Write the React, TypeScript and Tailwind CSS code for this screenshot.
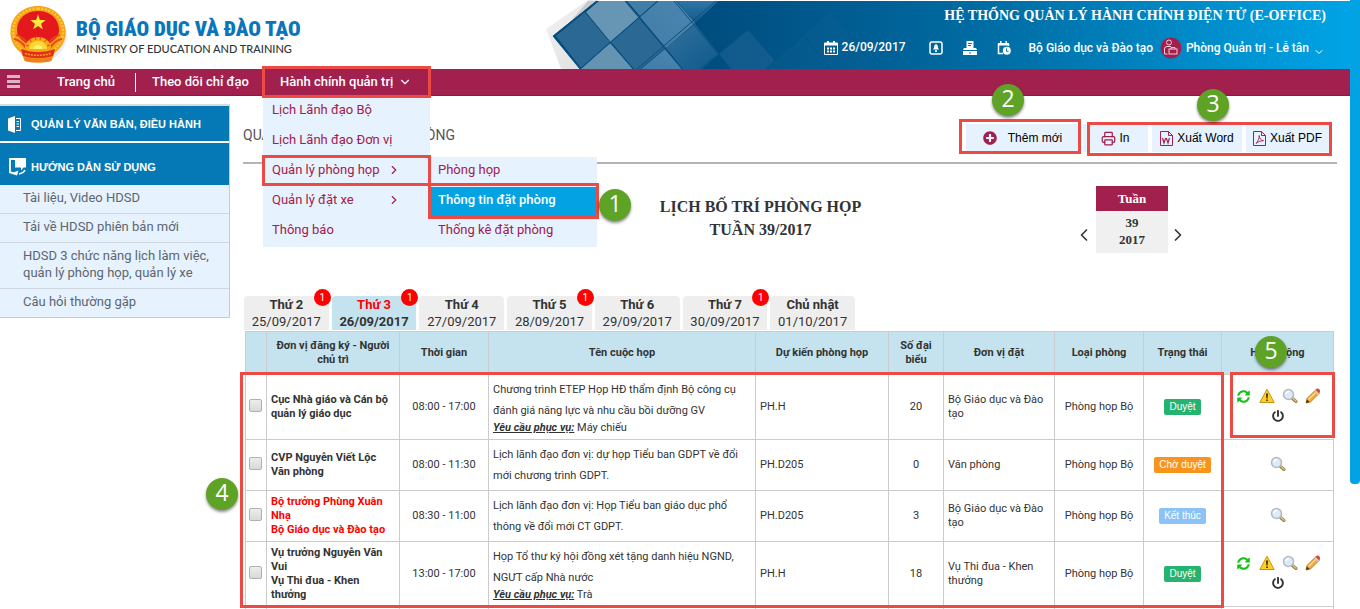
import type { ReactNode } from "react";
import { FaPlusCircle, FaPowerOff, FaSyncAlt } from "react-icons/fa";
import { ChevronDown, ChevronLeft, ChevronRight, Printer } from "lucide-react";

function Step({ n, className }: { n: number; className: string }) {
  return (
    <span
      className={`pointer-events-none absolute z-40 flex size-8 items-center justify-center rounded-full bg-[#5ea226] pb-1 font-['Open_Sans',sans-serif] text-[23px] leading-none text-white shadow-[0_2px_3px_rgba(0,0,0,0.45)] ${className}`}
    >
      {n}
    </span>
  );
}

function Frame({ className }: { className: string }) {
  return (
    <span
      className={`pointer-events-none absolute z-30 border-3 border-[#ec4a44] ${className}`}
    />
  );
}

function Emblem() {
  return (
    <svg viewBox="0 0 60 60" className="size-[60px] shrink-0" aria-hidden="true">
      <ellipse cx="32" cy="31" rx="27" ry="27" fill="#000" opacity="0.08" />
      <path
        d="M30 2C15 2 3.500 12 2.500 26c-1 10 4 18 11 23l3 8c9 2 18 2 27 0l3-8c7-5 12-13 11-23C56.500 12 45 2 30 2z"
        fill="#f6a216"
      />
      <path
        d="M30 4.500C16 4.500 6 14 5 26c-.4 8 3 15 10 20M30 4.500C44 4.500 54 14 55 26c.4 8-3 15-10 20"
        fill="none"
        stroke="#fcc93a"
        strokeWidth="2.500"
        strokeDasharray="2 1.500"
      />
      <path
        d="M30 7C18 7 9.500 14.500 9 25c-.2 5 1.500 8 4 10l7 6c3-6 17-6 20 0l7-6c2.500-2 4.200-5 4-10C50.500 14.500 42 7 30 7z"
        fill="#e5181d"
      />
      <path
        d="M30 10.500l1.900 5.500 5.800.1-4.600 3.600 1.700 5.600-4.800-3.400-4.800 3.400 1.700-5.600-4.600-3.600 5.800-.1z"
        fill="#fdea3c"
      />
      <path
        d="M8 31c4 1 8 3 11 8M6 35c5 1 9 4 12 9M52 31c-4 1-8 3-11 8M54 35c-5 1-9 4-12 9"
        fill="none"
        stroke="#e8461a"
        strokeWidth="1.800"
      />
      <path d="M17 44a13 11 0 0 1 26 0l-3 4H20z" fill="#f9a81a" />
      <path
        d="M21 42l-3-1M23.500 38l-2.500-3M28 36l-1-3.500M32 36l1-3.500M36.500 38l2.500-3M39 42l3-1"
        stroke="#e8461a"
        strokeWidth="1"
      />
      <path d="M21 45a9 8 0 0 1 18 0z" fill="#fdd835" />
      <path d="M25.500 45a4.500 4 0 0 1 9 0z" fill="#fff176" />
      <path d="M13 45c11 4 23 4 34 0l-2 7c-10 3-20 3-30 0z" fill="#e23119" />
      <path
        d="M17 49.500c9 2.500 17 2.500 26 0"
        fill="none"
        stroke="#f9a81a"
        strokeWidth="1.500"
        strokeDasharray="2 1"
      />
      <path d="M16 53c9 2 19 2 28 0l-1 4c-8 2-18 2-26 0z" fill="#f07f1b" />
    </svg>
  );
}

function BannerPattern() {
  return (
    <svg
      viewBox="0 0 400 69"
      className="absolute top-0 left-0 h-[69px] w-[400px]"
      aria-hidden="true"
    >
      <defs>
        <linearGradient id="shade" x1="0" y1="0" x2="1" y2="1">
          <stop offset="0" stopColor="#f4f4f4" />
          <stop offset="1" stopColor="#dcdcdc" />
        </linearGradient>
        <linearGradient id="mid" x1="0" y1="1" x2="1" y2="0">
          <stop offset="0" stopColor="#417ca6" />
          <stop offset="1" stopColor="#4a86af" />
        </linearGradient>
        <linearGradient id="low" x1="0" y1="0" x2="1" y2="1">
          <stop offset="0" stopColor="#34709c" />
          <stop offset="1" stopColor="#0d5a8c" />
        </linearGradient>
        <linearGradient id="top" x1="0" y1="0" x2="0" y2="1">
          <stop offset="0" stopColor="#2d76a6" />
          <stop offset="1" stopColor="#15598a" />
        </linearGradient>
      </defs>
      <path d="M3 29L45 0h12L10 36l27 33H18z" fill="url(#shade)" />
      <path d="M45 1h12L22 28z" fill="#a9a9a9" opacity="0.5" />
      <path d="M10 36L53 1h98v68H37z" fill="#004b7d" />
      <path d="M13 36L42 12l25 30-29 26z" fill="#2b6994" />
      <path d="M43 12L56 1h26l14 16-29 25z" fill="#6796b5" />
      <path d="M67 43l23 26H38z" fill="#6593b2" />
      <path d="M68 42l28-24 26 30-25 21h-6z" fill="#2b6994" />
      <path d="M84 1h30L97 16z" fill="#427da5" />
      <path d="M97 17l18-16h18l19 22-29 25z" fill="url(#mid)" />
      <path d="M134 1h41l-23 22z" fill="url(#top)" />
      <path d="M122 49l17 20H98z" fill="url(#mid)" />
      <path d="M123 48l29-24 24 30-17 15h-19z" fill="url(#low)" />
      <path
        d="M10 36L54 1M37 69L115 1M94 69l79-68M157 69l19-15M42 12l48 57M82 1l57 68M131 1l57 68M10 36l27 33"
        stroke="#0a4f80"
        strokeWidth="1"
        fill="none"
      />
      <path d="M176 54l29-24 27 31-9 8h-35z" fill="#1a5f91" opacity="0.7" />
      <path d="M232 60l55-48 40 50-6 7h-96z" fill="#1a6496" opacity="0.2" />
      <path d="M232 60l-9 9M232 60l29-25 26 34" stroke="#005084" fill="none" opacity="0.5" />
    </svg>
  );
}

function CalendarIcon() {
  return (
    <svg viewBox="0 0 14 14" className="size-[14px]" aria-hidden="true">
      <path d="M3 0h2v3H3zM9 0h2v3H9z" fill="#fff" />
      <path d="M.5 2h13v11.500H.5z" fill="none" stroke="#fff" />
      <path d="M0 2h14v2.500H0z" fill="#fff" />
      <path
        d="M3 6.500h2v2H3zM6 6.500h2v2H6zM9 6.500h2v2H9zM3 9.500h2v2H3zM6 9.500h2v2H6zM9 9.500h2v2H9z"
        fill="#fff"
      />
    </svg>
  );
}

function BellBoxIcon() {
  return (
    <svg viewBox="0 0 14 14" className="size-[14px]" aria-hidden="true">
      <rect x="1" y="1" width="12" height="12" rx="2" fill="none" stroke="#fff" strokeWidth="1.500" />
      <path d="M7 3c-2 .5-1.800 3-2 4L3.800 8.500h6.400L9 7c-.2-1 0-3.500-2-4zM6 9.200h2V11H6z" fill="#fff" />
    </svg>
  );
}

function DeskPrinterIcon() {
  return (
    <svg viewBox="0 0 14 14" className="size-[14px]" aria-hidden="true">
      <path d="M3.500 0h7v7h-7z" fill="#fff" />
      <path d="M5 2.500h4M5 4.500h3" stroke="#0c76b0" />
      <path d="M1 7h12l1 2H0zM0 10h14v4H0z" fill="#fff" />
      <path d="M6 12h2" stroke="#0c76b0" />
    </svg>
  );
}

function ScheduleIcon() {
  return (
    <svg viewBox="0 0 14 14" className="size-[14px]" aria-hidden="true">
      <path d="M1.500 3v9.500H6M11.500 3v2M1 3h11" fill="none" stroke="#fff" strokeWidth="1.500" />
      <path d="M3 0h1.500v3H3zM8.500 0H10v3H8.500z" fill="#fff" />
      <path d="M1 2h11v2.500H1z" fill="#fff" />
      <circle cx="9.800" cy="9.800" r="4" fill="#fff" />
      <path d="M9.500 7.500v2.800h2" fill="none" stroke="#0c7ab5" />
    </svg>
  );
}

function AvatarIcon() {
  return (
    <svg viewBox="0 0 22 22" className="size-[22px] shrink-0" aria-hidden="true">
      <circle cx="11" cy="11" r="10.500" fill="#a1204e" />
      <circle cx="9" cy="5.500" r="2.500" fill="none" stroke="#f3c9d7" />
      <path d="M4.500 17v-5a2.500 2.500 0 0 1 2.500-2.500h4M4.500 17h3" fill="none" stroke="#f3c9d7" />
      <rect x="9" y="12" width="8" height="5" fill="none" stroke="#f3c9d7" />
      <path d="M11 12v-1.500h4V12" fill="none" stroke="#f3c9d7" />
    </svg>
  );
}

function BinderIcon() {
  return (
    <svg viewBox="0 0 14 17" className="h-[17px] w-[14px]" aria-hidden="true">
      <path d="M0 2.500L7 0v17L0 14.500z" fill="#fff" />
      <path d="M8 2.500h4.500v12H8" fill="none" stroke="#fff" />
      <path d="M8.500 5.500H11M8.500 8H11M8.500 10.500H11" stroke="#fff" />
    </svg>
  );
}

function GuideIcon() {
  return (
    <svg viewBox="0 0 18 18" className="size-[18px]" aria-hidden="true">
      <path d="M6 1H1v12.500" fill="none" stroke="#fff" strokeWidth="1.800" />
      <path d="M6 0h11v9.500h-2.500L12 12.500v-3H6z" fill="#fff" />
      <path d="M0 13l5 1.200 4.500-1.700L8 17.500 0 15z" fill="#fff" />
      <path d="M10 16c3-.5 5-2 6-4" fill="none" stroke="#fff" strokeWidth="1.500" />
    </svg>
  );
}

function FileIcon({ kind }: { kind: "word" | "pdf" }) {
  return (
    <svg viewBox="0 0 13 15" className="h-[15px] w-[13px]" fill="none" stroke="#a1204e" aria-hidden="true">
      <path d="M.5.5h8l4 4v10H.5z" />
      <path d="M8.500.5v4h4" />
      {kind === "word" ? (
        <path d="M2.500 7l1.500 5 1.500-4.500h1L8 12l1.500-5" strokeWidth="1.200" />
      ) : (
        <path d="M3 12.500c2-2 3.500-5.500 3.200-8 .2 3 1.800 5 4.300 5.200-2.500 0-5.500 1-7.500 2.800z" strokeWidth=".9" />
      )}
    </svg>
  );
}

function WarningIcon() {
  return (
    <svg viewBox="0 0 16 16" className="size-4" aria-hidden="true">
      <path d="M8 1.200L15.200 14.500H.8z" fill="#fbd02b" stroke="#c8930c" strokeLinejoin="round" />
      <path d="M7 5.500h2l-.4 5H7.400zM7.200 11.500h1.600V13H7.200z" fill="#3a2c05" />
    </svg>
  );
}

function MagnifierIcon() {
  return (
    <svg viewBox="0 0 16 16" className="size-4" aria-hidden="true">
      <path d="M10.500 10.500l3.500 3" stroke="#8d7a4a" strokeWidth="3" strokeLinecap="round" />
      <path d="M11 10.500l3 2.700" stroke="#e4c878" strokeWidth="1.500" strokeLinecap="round" />
      <circle cx="6.500" cy="6.500" r="5" fill="#dcebfa" stroke="#b3bac4" strokeWidth="1.500" />
      <path d="M4 6a3 3 0 0 1 3-2.500" stroke="#fff" strokeWidth="1.500" fill="none" />
    </svg>
  );
}

function PencilIcon() {
  return (
    <svg viewBox="0 0 16 16" className="size-4" aria-hidden="true">
      <path d="M1 15l1-4.500L11 1.500l3.500 3.500-9 9z" fill="#f3ac3b" stroke="#a8691c" strokeWidth=".8" />
      <path d="M10.500 2L12 .6c1.500-.6 3.600 1.400 3 3L14 5.500z" fill="#dd4a34" />
      <path d="M9.300 3.200l1.200-1.200L14 5.500l-1.200 1.200z" fill="#c9ccd3" />
      <path d="M3.500 11.500l7-7" stroke="#fbdc8d" strokeWidth="1.200" />
      <path d="M1 15l1-3.500L4.500 14z" fill="#4b3214" />
    </svg>
  );
}

const guideLinks = [
  "Tài liệu, Video HDSD",
  "Tải về HDSD phiên bản mới",
  "HDSD 3 chức năng lịch làm việc, quản lý phòng họp, quản lý xe",
  "Câu hỏi thường gặp",
];

const days = [
  { name: "Thứ 2", date: "25/09/2017", count: 1 },
  { name: "Thứ 3", date: "26/09/2017", count: 1, active: true },
  { name: "Thứ 4", date: "27/09/2017" },
  { name: "Thứ 5", date: "28/09/2017", count: 1 },
  { name: "Thứ 6", date: "29/09/2017" },
  { name: "Thứ 7", date: "30/09/2017", count: 1 },
  { name: "Chủ nhật", date: "01/10/2017" },
];

const headings = [
  "Đơn vị đăng ký - Người chủ trì",
  "Thời gian",
  "Tên cuộc họp",
  "Dự kiến phòng họp",
  "Số đại biểu",
  "Đơn vị đặt",
  "Loại phòng",
  "Trạng thái",
  "Hành động",
];

type Status = "Duyệt" | "Chờ duyệt" | "Kết thúc";

const statusColor: Record<Status, string> = {
  Duyệt: "bg-[#26b36f]",
  "Chờ duyệt": "bg-[#f8941d]",
  "Kết thúc": "bg-[#8bc3f7]",
};

type Booking = {
  host: string;
  unit?: string;
  urgent?: boolean;
  time: string;
  topic: string;
  service?: string;
  room: string;
  guests: number;
  bookedBy: string;
  status: Status;
  editable?: boolean;
};

const bookings: Booking[] = [
  {
    host: "Cục Nhà giáo và Cán bộ quản lý giáo dục",
    time: "08:00 - 17:00",
    topic: "Chương trình ETEP Họp HĐ thẩm định Bộ công cụ đánh giá năng lực và nhu cầu bồi dưỡng GV",
    service: "Máy chiếu",
    room: "PH.H",
    guests: 20,
    bookedBy: "Bộ Giáo dục và Đào tạo",
    status: "Duyệt",
    editable: true,
  },
  {
    host: "CVP Nguyễn Viết Lộc",
    unit: "Văn phòng",
    time: "08:00 - 11:30",
    topic: "Lịch lãnh đạo đơn vị: dự họp Tiểu ban GDPT về đổi mới chương trình GDPT.",
    room: "PH.D205",
    guests: 0,
    bookedBy: "Văn phòng",
    status: "Chờ duyệt",
  },
  {
    host: "Bộ trưởng Phùng Xuân Nhạ",
    unit: "Bộ Giáo dục và Đào tạo",
    urgent: true,
    time: "08:30 - 11:00",
    topic: "Lịch lãnh đạo đơn vị: Họp Tiểu ban giáo dục phổ thông về đổi mới CT GDPT.",
    room: "PH.D205",
    guests: 3,
    bookedBy: "Bộ Giáo dục và Đào tạo",
    status: "Kết thúc",
  },
  {
    host: "Vụ trưởng Nguyễn Văn Vui",
    unit: "Vụ Thi đua - Khen thưởng",
    time: "13:00 - 17:00",
    topic: "Họp Tổ thư ký hội đồng xét tặng danh hiệu NGND, NGƯT cấp Nhà nước",
    service: "Trà",
    room: "PH.H",
    guests: 18,
    bookedBy: "Vụ Thi đua - Khen thưởng",
    status: "Duyệt",
    editable: true,
  },
];

function ActionButton({ label, children }: { label: string; children: ReactNode }) {
  return (
    <button type="button" aria-label={label} className="flex size-4 items-center justify-center">
      {children}
    </button>
  );
}

function RowActions({ editable }: { editable?: boolean }) {
  return (
    <div className="mx-auto flex w-[96px] flex-wrap items-center justify-center gap-x-[7px] gap-y-1 pb-[2px] pl-px">
      {editable && (
        <>
          <ActionButton label="Làm mới">
            <FaSyncAlt className="size-[13px] text-[#16c216]" />
          </ActionButton>
          <ActionButton label="Cảnh báo">
            <WarningIcon />
          </ActionButton>
        </>
      )}
      <ActionButton label="Xem">
        <MagnifierIcon />
      </ActionButton>
      {editable && (
        <>
          <ActionButton label="Sửa">
            <PencilIcon />
          </ActionButton>
          <ActionButton label="Kết thúc">
            <FaPowerOff className="size-3 text-[#333]" />
          </ActionButton>
        </>
      )}
    </div>
  );
}

function Header() {
  return (
    <header className="flex h-[69px]">
      <div className="flex w-[543px] shrink-0 items-start gap-1 pt-1 pl-2">
        <Emblem />
        <div className="pt-[13px] pl-1">
          <div className="font-['Liberation_Sans_Narrow','Roboto_Condensed',Roboto,sans-serif] text-[21px] leading-6 font-black whitespace-nowrap text-[#0b75bc]">
            BỘ GIÁO DỤC VÀ ĐÀO TẠO
          </div>
          <div className="font-[Lato,sans-serif] text-[11px] leading-4 font-medium whitespace-nowrap text-[#333]">
            MINISTRY OF EDUCATION AND TRAINING
          </div>
        </div>
      </div>
      <div className="relative flex-1">
        <div className="absolute top-px right-0 bottom-0 left-[150px] bg-linear-to-r from-[#004b7d] via-[#0071a9] to-[#00a4e6]" />
        <BannerPattern />
        <div className="relative flex flex-col items-end pt-[6px] text-white">
          <div className="pr-6 font-['Liberation_Serif',serif] text-[14px] leading-5 font-bold">
            HỆ THỐNG QUẢN LÝ HÀNH CHÍNH ĐIỆN TỬ (E-OFFICE)
          </div>
          <div className="mt-[9px] flex items-center pr-[25px] text-[12px] leading-6 font-medium">
            <CalendarIcon />
            <span className="pb-[2px] pl-1">26/09/2017</span>
            <div className="mr-[18px] ml-[23px] flex gap-5">
              <button type="button" aria-label="Nhắc việc">
                <BellBoxIcon />
              </button>
              <button type="button" aria-label="Máy in">
                <DeskPrinterIcon />
              </button>
              <button type="button" aria-label="Lịch">
                <ScheduleIcon />
              </button>
            </div>
            <span>Bộ Giáo dục và Đào tạo</span>
            <button type="button" className="ml-[7px] flex items-center gap-1">
              <AvatarIcon />
              Phòng Quản trị - Lễ tân
              <ChevronDown className="mt-2 size-3" />
            </button>
          </div>
        </div>
      </div>
    </header>
  );
}

function Nav() {
  const row = "flex h-[30px] items-center pr-2 pl-[9px] pb-1";
  const subRow = "flex h-[30px] items-center pl-2 pb-1";
  return (
    <nav className="relative z-20 flex h-[27px] items-center border-b border-[#8b1a42] bg-[#a1204e] text-[13px] font-medium text-white">
      <button type="button" aria-label="Mở menu" className="mb-[2px] ml-[7px] flex w-[13px] flex-col gap-[2px]">
        <span className="h-[3px] bg-[#dfb3c3]" />
        <span className="h-[3px] bg-[#dfb3c3]" />
        <span className="h-[3px] bg-[#dfb3c3]" />
      </button>
      <a href="#home" className="ml-[37px] w-[79px] border-r border-white pb-px leading-[18px]">
        Trang chủ
      </a>
      <a href="#tasks" className="ml-4 w-[111px] pb-px">
        Theo dõi chỉ đạo
      </a>
      <div className="relative h-[26px] w-[168px]">
        <a href="#admin" className="flex h-full items-center gap-1 pl-[17px]">
          Hành chính quản trị
          <ChevronDown className="ml-px size-[14px]" />
        </a>
        <ul className="absolute top-full left-0 w-[167px] bg-[#e6f2fe] pt-[2px] text-[13px] font-normal text-[#a1204e]">
          <li>
            <a href="#leaders" className={row}>Lịch Lãnh đạo Bộ</a>
          </li>
          <li>
            <a href="#units" className={row}>Lịch Lãnh đạo Đơn vị</a>
          </li>
          <li className="relative">
            <a href="#rooms" className={row}>
              <span className="w-[115px]">Quản lý phòng họp</span>
              <ChevronRight className="size-[14px]" />
            </a>
            <ul className="absolute top-0 left-full w-[167px] bg-[#e6f2fe]">
              <li>
                <a href="#list" className={subRow}>Phòng họp</a>
              </li>
              <li className="relative border-b border-white bg-[#03a3e3]">
                <a href="#booking" className="flex h-[29px] items-center pb-1 pl-2 font-medium text-white">
                  Thông tin đặt phòng
                </a>
                <Frame className="-top-1 -right-[2px] -bottom-[3px] -left-[2px]" />
                <Step n={1} className="top-[2px] left-[169px]" />
              </li>
              <li>
                <a href="#stats" className={subRow}>Thống kê đặt phòng</a>
              </li>
            </ul>
            <Frame className="-top-[2px] -right-px bottom-px -left-px" />
          </li>
          <li>
            <a href="#cars" className={row}>
              <span className="w-[115px]">Quản lý đặt xe</span>
              <ChevronRight className="size-[14px]" />
            </a>
          </li>
          <li>
            <a href="#notices" className={row}>Thông báo</a>
          </li>
        </ul>
        <Frame className="-top-[3px] right-0 -bottom-[3px] -left-px" />
      </div>
    </nav>
  );
}

function Sidebar() {
  const heading =
    "flex items-center bg-[#0479b6] font-['Liberation_Sans',sans-serif] text-[11px] font-bold text-white";
  return (
    <aside className="w-[230px] shrink-0 self-start border-t-2 border-r border-b border-t-[#dcdcdc] border-r-[#c8ccd0] border-b-[#c8ccd0]">
      <h2 className={`${heading} h-[35px] gap-[9px] pt-px pl-2`}>
        <BinderIcon />
        QUẢN LÝ VĂN BẢN, ĐIỀU HÀNH
      </h2>
      <h2 className={`${heading} mt-[2px] h-[42px] gap-1 pt-[6px] pl-[9px]`}>
        <GuideIcon />
        HƯỚNG DẪN SỬ DỤNG
      </h2>
      <ul className="bg-[#e6f2fe] text-[13px] leading-[17px] text-[#5c6670]">
        {guideLinks.map((t) => (
          <li key={t} className="border-b border-[#cfd6dc] last:border-b-0">
            <a href="#guide" className="block pt-1 pr-3 pb-[7px] pl-[23px]">
              {t}
            </a>
          </li>
        ))}
      </ul>
    </aside>
  );
}

function Toolbar() {
  const button = "flex h-7 items-center justify-center bg-[#e6f2fe] text-[12px] text-black";
  return (
    <div className="flex items-start justify-between border-b-2 border-[#b4b4b4] pt-5 pb-[10px]">
      <h1 className="pt-px text-[14px] leading-5 text-[#555]">QUẢN LÝ THÔNG TIN ĐẶT PHÒNG</h1>
      <div className="flex gap-1 pr-2 font-['Liberation_Sans',sans-serif]">
        <div className="relative">
          <button type="button" className={`${button} w-[113px] gap-[11px]`}>
            <FaPlusCircle className="size-[14px] text-[#a1204e]" />
            Thêm mới
          </button>
          <Frame className="-top-[5px] -right-[2px] -bottom-[2px] -left-[7px]" />
          <Step n={2} className="-top-10 left-[26px]" />
        </div>
        <div className="relative flex gap-1">
          <button type="button" className={`${button} w-[65px] gap-[3px]`}>
            <Printer className="size-[15px] text-[#a1204e]" />
            In
          </button>
          <button type="button" className={`${button} w-[90px] gap-1`}>
            <FileIcon kind="word" />
            Xuất Word
          </button>
          <button type="button" className={`${button} w-[83px] gap-1`}>
            <FileIcon kind="pdf" />
            Xuất PDF
          </button>
          <Frame className="-top-[2px] -right-[3px] -bottom-1 left-1" />
          <Step n={3} className="-top-[35px] left-[114px]" />
        </div>
      </div>
    </div>
  );
}

function WeekHeading() {
  return (
    <div className="flex items-start pt-[22px] pr-[149px] pl-[204px] font-['Liberation_Serif',serif]">
      <h2 className="flex-1 pt-[9px] text-center text-[16px] leading-[23px] font-bold text-[#333]">
        LỊCH BỐ TRÍ PHÒNG HỌP
        <br />
        TUẦN 39/2017
      </h2>
      <div className="flex items-start">
        <button type="button" aria-label="Tuần trước" className="mt-[39px] mr-[2px]">
          <ChevronLeft className="size-5 text-[#333]" />
        </button>
        <div className="w-[72px] bg-[#f0f0f0] pb-[5px] text-center text-[13px] leading-[17px] font-bold text-[#333]">
          <div className="mb-[3px] bg-[#a1204e] py-1 text-white">Tuần</div>
          39
          <br />
          2017
        </div>
        <button type="button" aria-label="Tuần sau" className="mt-[39px]">
          <ChevronRight className="size-5 text-[#333]" />
        </button>
      </div>
    </div>
  );
}

function DayTabs() {
  return (
    <div role="tablist" className="mt-[43px] ml-px grid w-[614px] grid-cols-7">
      {days.map((d) => (
        <button
          key={d.name}
          type="button"
          role="tab"
          aria-selected={Boolean(d.active)}
          className={`relative mr-[3px] h-[34px] rounded-t text-center text-[13px] leading-[17px] text-[#333] ${
            d.active ? "bg-[#c5e3ee]" : "bg-[#eee]"
          }`}
        >
          <span className={`block font-bold ${d.active ? "text-[#f00]" : ""}`}>{d.name}</span>
          <span className={`block ${d.active ? "font-bold" : ""}`}>{d.date}</span>
          {d.count && (
            <span className="absolute -top-[7px] -right-[2px] flex size-[17px] items-center justify-center rounded-full bg-[#f00] pb-px text-[10px] text-white">
              {d.count}
            </span>
          )}
        </button>
      ))}
    </div>
  );
}

function CheckCell({ label }: { label?: string }) {
  return (
    <td className="border border-[#ccc] pr-[2px] pb-[4px] text-center align-middle">
      {label && (
        <input
          type="checkbox"
          aria-label={label}
          className="mx-auto block size-[13px] appearance-none rounded-[2px] border border-[#b0b0b0] bg-linear-to-b from-[#ededed] to-[#d9d9d9]"
        />
      )}
    </td>
  );
}

function BookingTable() {
  const cell = "border border-[#ccc] px-1";
  return (
    <div className="relative mt-px mr-[3px] ml-[2px]">
      <table className="w-full table-fixed border-collapse text-[11px] leading-[14px] text-[#333]">
        <colgroup>
          <col className="w-[21px]" />
          <col className="w-[133px]" />
          <col className="w-[89px]" />
          <col />
          <col className="w-[133px]" />
          <col className="w-[55px]" />
          <col className="w-[111px]" />
          <col className="w-[89px]" />
          <col className="w-[78px]" />
          <col className="w-[112px]" />
        </colgroup>
        <thead>
          <tr className="h-[43px] bg-[#c5e3ee]">
            <th className={cell} aria-label="Chọn" />
            {headings.map((h) => (
              <th key={h} scope="col" className={`${cell} font-bold`}>
                {h}
              </th>
            ))}
          </tr>
        </thead>
        <tbody>
          {bookings.map((b) => (
            <tr key={b.host} className="h-[51px]">
              <CheckCell label={b.host} />
              <td className={`${cell} py-1 font-bold ${b.urgent ? "text-[#f00]" : ""}`}>
                {b.host}
                {b.unit && (
                  <>
                    <br />
                    {b.unit}
                  </>
                )}
              </td>
              <td className={`${cell} text-center`}>{b.time}</td>
              <td className={`${cell} py-1 pr-4`}>
                <p className="leading-[21px]">{b.topic}</p>
                {b.service && (
                  <p>
                    <b className="italic underline">Yêu cầu phục vụ:</b> {b.service}
                  </p>
                )}
              </td>
              <td className={cell}>{b.room}</td>
              <td className={`${cell} text-center`}>{b.guests}</td>
              <td className={cell}>{b.bookedBy}</td>
              <td className={`${cell} text-center`}>Phòng họp Bộ</td>
              <td className={`${cell} text-center`}>
                <span
                  className={`inline-block rounded-[2px] px-[5px] font-['Liberation_Sans',sans-serif] text-[10px] leading-4 text-white ${statusColor[b.status]}`}
                >
                  {b.status}
                </span>
              </td>
              <td className={cell}>
                <RowActions editable={b.editable} />
              </td>
            </tr>
          ))}
          <tr className="h-[51px]">
            <CheckCell />
            {headings.map((h) => (
              <td key={h} className={cell} />
            ))}
          </tr>
        </tbody>
      </table>
      <Frame className="top-[41px] right-[110px] -left-[5px] h-[236px]" />
      <Step n={4} className="top-[147px] -left-[39px]" />
      <Frame className="top-[41px] -right-px h-[66px] w-[105px]" />
      <Step n={5} className="top-[5px] right-[47px]" />
    </div>
  );
}

export default function App() {
  return (
    <div className="flex h-screen items-start overflow-hidden bg-white font-[Roboto,sans-serif]">
      <div className="min-w-0 flex-1">
        <Header />
        <Nav />
        <div className="flex pt-2">
          <Sidebar />
          <main className="min-w-0 flex-1 pr-[13px] pl-[13px]">
            <Toolbar />
            <WeekHeading />
            <DayTabs />
            <BookingTable />
          </main>
        </div>
      </div>
      <div className="h-[484px] w-[10px] shrink-0 rounded-b bg-[#03a3e3]" />
    </div>
  );
}
